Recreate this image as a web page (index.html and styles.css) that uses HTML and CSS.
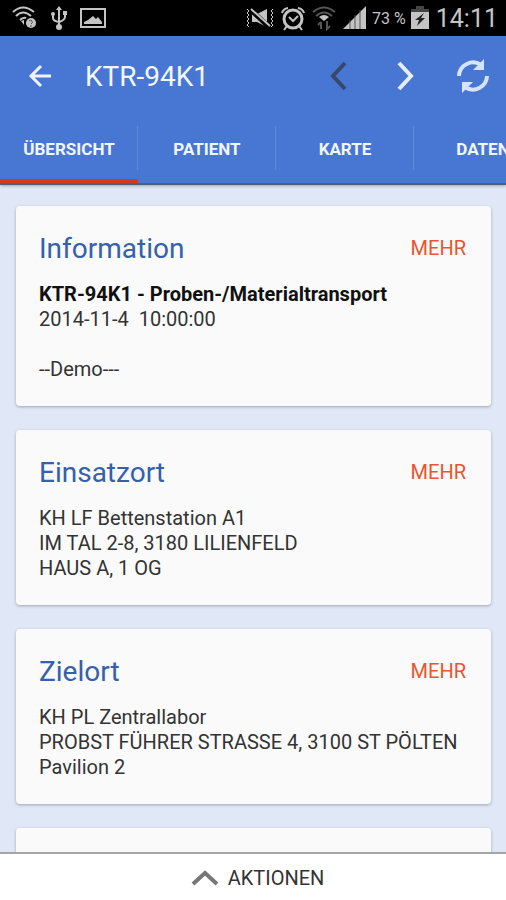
FILE: index.html
```html
<!DOCTYPE html>
<html lang="de">
<head>
    <meta charset="UTF-8">
    <meta name="viewport" content="width=device-width, initial-scale=1">
    <title>KTR-94K1</title>
    <link rel="stylesheet" href="styles.css">
</head>
<body>
<div class="status-bar">
    <div class="status-left">
        <svg width="26" height="26" viewBox="0 0 26 26" fill="none" stroke="#c4c4c4" stroke-width="2">
            <path d="M1 7Q11 -2 22 7M4 11Q11 4 19 11M8 15Q11 12 14 13"/>
            <circle cx="19" cy="18" r="5" fill="#c4c4c4" stroke="none"/>
            <path d="M17 16Q19 14 20 16T19 19M19 20V22" stroke="#555" stroke-width="1"/>
            <path d="M9 16L12 20V15Z" fill="#c4c4c4" stroke="none"/>
        </svg>
        <svg width="18" height="26" viewBox="0 0 18 26" fill="none" stroke="#c4c4c4" stroke-width="2">
            <path d="M9 4V22M3 9V13Q3 16 9 17M15 8V12Q15 15 9 17"/>
            <path d="M6 5L9 1L12 5Z" fill="#c4c4c4" stroke="none"/>
            <circle cx="9" cy="22" r="3" fill="#c4c4c4" stroke="none"/>
            <circle cx="3" cy="9" r="2" fill="#c4c4c4" stroke="none"/>
            <path d="M13 6H17V10H13Z" fill="#c4c4c4" stroke="none"/>
        </svg>
        <svg width="26" height="26" viewBox="0 0 26 26">
            <path d="M1 4H25V22H1Z" fill="none" stroke="#c4c4c4" stroke-width="2"/>
            <path d="M4 19V17L8 15L13 11L16 14L18 12L22 17V19Z" fill="#c4c4c4"/>
        </svg>
    </div>
    <div class="status-right">
        <svg width="30" height="26" viewBox="0 0 30 26" fill="none" stroke="#c4c4c4" stroke-width="2">
            <path d="M2 4L4 6L2 8L4 10L2 12L4 14L2 16L4 18L2 20L4 22M28 4L26 6L28 8L26 10L28 12L26 14L28 16L26 18L28 20L26 22" stroke-width="1"/>
            <path d="M7 9H12L22 4V22L12 17H7Z" fill="#c4c4c4" stroke="none"/>
            <path d="M6 5L24 22" stroke="#000" stroke-width="5"/>
            <path d="M6 4L25 21"/>
        </svg>
        <svg width="26" height="26" viewBox="0 0 26 26" fill="none" stroke="#c4c4c4" stroke-width="3">
            <circle cx="13" cy="14" r="9"/>
            <path d="M9 12L13 16L18 11M2 8Q3 4 8 3M24 8Q23 4 18 3M7 21L4 25M19 21L22 25" stroke-width="2"/>
        </svg>
        <svg width="26" height="26" viewBox="0 0 26 26" fill="none" stroke="#555" stroke-width="2">
            <path d="M2 7Q13 -2 24 7M5 11Q13 4 21 11"/>
            <path d="M8 12Q13 8 18 12L13 16Z" fill="#c4c4c4" stroke="none"/>
            <path d="M10 24V17M7 20L10 17M16 16V24L19 21"/>
        </svg>
        <svg width="25" height="26" viewBox="0 0 25 26">
            <path d="M1 24L24 1V24Z" fill="#c4c4c4"/>
            <path d="M8 15V24M13 10V24M18 5V24" stroke="#555" stroke-width="1"/>
        </svg>
        <span class="battery-text">73 %</span>
        <svg width="18" height="26" viewBox="0 0 18 26">
            <path d="M0 4H5V1H13V4H18V9H0Z" fill="#444"/>
            <path d="M0 7H18V24H0Z" fill="#c4c4c4"/>
            <path d="M13 8L4 15H8L6 21L14 13H10Z" fill="#222"/>
        </svg>
        <span class="clock">14:11</span>
    </div>
</div>

<header class="app-bar">
    <div class="toolbar">
        <button class="icon-button" aria-label="Zurück">
            <svg width="24" height="24" viewBox="0 0 24 24" fill="none" stroke="#eef3ff" stroke-width="3">
                <path d="M23 12H3M13 2L3 12L13 22"/>
            </svg>
        </button>
        <h1>KTR-94K1</h1>
        <nav class="toolbar-actions">
            <button class="icon-button" aria-label="Vorheriger" disabled>
                <svg width="28" height="32" viewBox="0 0 28 32" fill="none" stroke="#38486c" stroke-width="4">
                    <path d="M17 3L5 16L17 29"/>
                </svg>
            </button>
            <button class="icon-button" aria-label="Nächster">
                <svg width="20" height="32" viewBox="0 0 20 32" fill="none" stroke="#e4ecfd" stroke-width="4">
                    <path d="M3 3L15 16L3 29"/>
                </svg>
            </button>
            <button class="icon-button" aria-label="Aktualisieren">
                <svg width="34" height="36" viewBox="0 0 34 36">
                    <path d="M3 18A14 14 0 0 1 25 7M31 18A14 14 0 0 1 9 29" fill="none" stroke="#d6e3fb" stroke-width="4"/>
                    <path d="M28 1V12H17ZM6 35V24H17Z" fill="#d6e3fb"/>
                </svg>
            </button>
        </nav>
    </div>
    <nav class="tabs">
        <a class="tab active" href="#uebersicht">ÜBERSICHT</a>
        <a class="tab" href="#patient">PATIENT</a>
        <a class="tab" href="#karte">KARTE</a>
        <a class="tab" href="#daten">DATEN</a>
    </nav>
</header>

<main class="content" id="uebersicht">
    <section class="card">
        <div class="card-header">
            <h2>Information</h2>
            <a class="more" href="#information">MEHR</a>
        </div>
        <p><strong>KTR-94K1 - Proben-/Materialtransport</strong><br>
        2014-11-4&nbsp; 10:00:00<br>
        <br>
        --Demo---</p>
    </section>
    <section class="card">
        <div class="card-header">
            <h2>Einsatzort</h2>
            <a class="more" href="#einsatzort">MEHR</a>
        </div>
        <p>KH LF Bettenstation A1<br>
        IM TAL 2-8, 3180 LILIENFELD<br>
        HAUS A, 1 OG</p>
    </section>
    <section class="card">
        <div class="card-header">
            <h2>Zielort</h2>
            <a class="more" href="#zielort">MEHR</a>
        </div>
        <p>KH PL Zentrallabor<br>
        PROBST FÜHRER STRASSE 4, 3100 ST PÖLTEN<br>
        Pavilion 2</p>
    </section>
    <section class="card"></section>
</main>

<button class="actions">
    <svg width="28" height="16" viewBox="0 0 28 16" fill="none" stroke="#777" stroke-width="4">
        <path d="M2 14L14 3L26 14"/>
    </svg>
    AKTIONEN
</button>
</body>
</html>
```

FILE: styles.css
```css
* {
    box-sizing: border-box;
}

body {
    margin: 0;
    height: 100vh;
    display: flex;
    flex-direction: column;
    overflow: hidden;
    font-family: Roboto, "Noto Sans", sans-serif;
    font-size: 20px;
    color: #333;
    background-color: #e0e7f6;
}

h1, h2, p {
    margin: 0;
    font-weight: 400;
}

svg {
    display: block;
    flex: none;
}

button {
    border: none;
    padding: 0;
    background: none;
    font: inherit;
    color: inherit;
}

a {
    text-decoration: none;
}

.status-bar {
    flex: none;
    display: flex;
    justify-content: space-between;
    height: 36px;
    padding: 0 8px 0 12px;
    background-color: #000;
    color: #c4c4c4;
}

.status-left,
.status-right {
    display: flex;
    align-items: center;
}

.status-left {
    gap: 12px;
}

.status-right {
    gap: 5px;
}

.battery-text {
    font-size: 16px;
}

.clock {
    margin-left: 2px;
    font-size: 25px;
}

.app-bar {
    flex: none;
    background-color: #4877d3;
    color: #f2f6ff;
    border-bottom: 2px solid #4d6075;
    box-shadow: 0 1px 3px rgba(0, 0, 0, 0.3);
}

.toolbar {
    display: flex;
    align-items: center;
    height: 80px;
    padding: 0 16px 0 28px;
}

.toolbar h1 {
    flex: 1;
    margin-left: 33px;
    font-size: 28px;
}

.toolbar-actions {
    display: flex;
    align-items: center;
    gap: 40px;
}

.tabs {
    display: flex;
    height: 67px;
    overflow: hidden;
}

.tab {
    flex: 0 0 138px;
    display: flex;
    align-items: center;
    justify-content: center;
    padding-top: 2px;
    border-bottom: 4px solid transparent;
    background: linear-gradient(#6189d8, #6189d8) right center / 1px 44px no-repeat;
    color: inherit;
    font-size: 17px;
    font-weight: 700;
}

.tab.active {
    border-bottom-color: #d23b1d;
}

.content {
    flex: 1;
    min-height: 0;
    display: flex;
    flex-direction: column;
    gap: 24px;
    padding: 21px 15px 0 16px;
    overflow: hidden;
}

.card {
    flex: none;
    min-height: 175px;
    padding: 24px 25px 24px 23px;
    border-radius: 4px;
    background-color: #fafafa;
    box-shadow: 0 1px 3px rgba(60, 70, 100, 0.4);
}

.card-header {
    display: flex;
    justify-content: space-between;
    align-items: center;
    height: 36px;
    margin-bottom: 16px;
}

.card h2 {
    font-size: 28px;
    color: #3460ad;
}

.card p {
    line-height: 25px;
}

.card strong {
    color: #111;
}

.more {
    color: #ea5430;
}

.actions {
    flex: none;
    display: flex;
    align-items: center;
    justify-content: center;
    gap: 9px;
    height: 48px;
    padding: 2px 0 0 9px;
    border-top: 2px solid #a5a5a5;
    background-color: #fff;
}
```
